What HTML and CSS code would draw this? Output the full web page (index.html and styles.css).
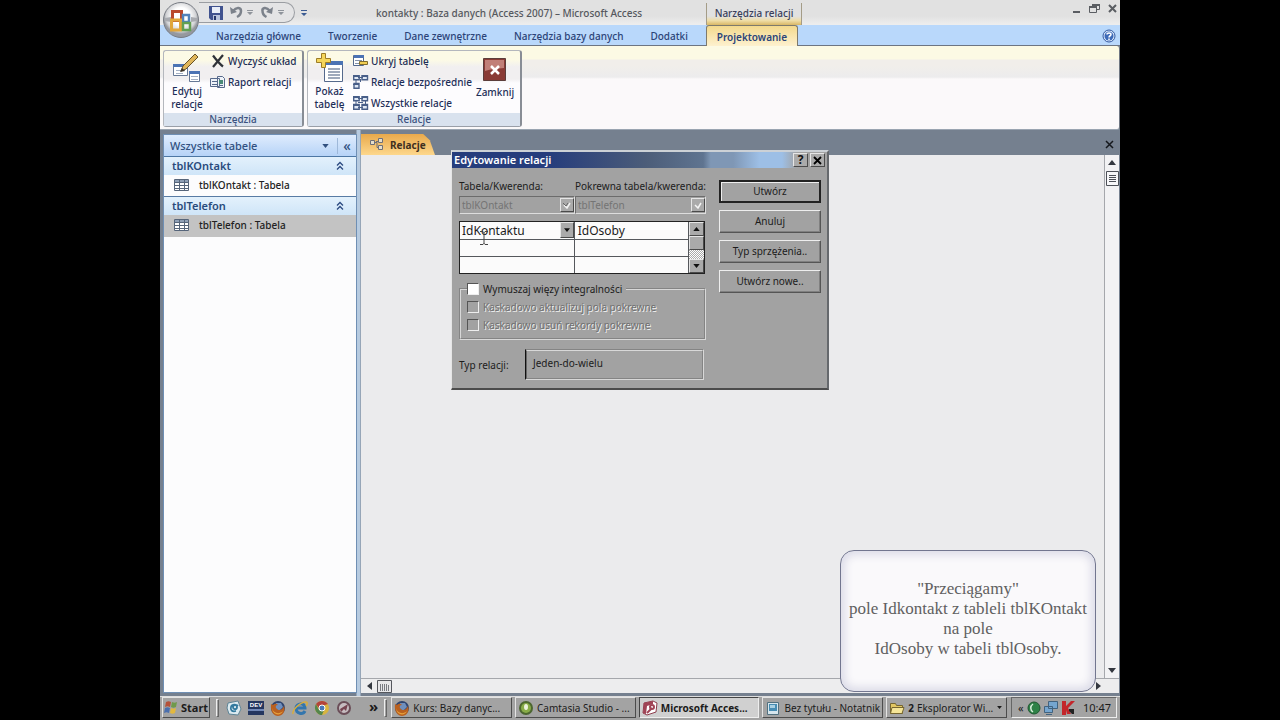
FILE: index.html
```html
<!DOCTYPE html>
<html lang="pl">
<head>
<meta charset="utf-8">
<title>kontakty : Baza danych (Access 2007) - Microsoft Access</title>
<link rel="stylesheet" href="styles.css">
</head>
<body>
<svg class="defs" aria-hidden="true">
  <symbol id="table" viewBox="0 0 16 14"><path fill="#fff" stroke="#56657a" d="M.5 1.5h14v11H.5z"/><path fill="#8fa0b6" d="M1 2h13v2H1z"/><path stroke="#56657a" fill="none" d="M1 4.5h13M1 7.5h13M1 10.5h13M5.500 2v10M10.500 2v10"/></symbol>
  <symbol id="up2" viewBox="0 0 8 10"><path fill="none" stroke="#2c4a80" stroke-width="1.300" d="M1 4.500l3-3 3 3M1 8.500l3-3 3 3"/></symbol>
  <symbol id="down" viewBox="0 0 8 5"><path d="M0 0h8L4 5z" fill="currentColor"/></symbol>
  <symbol id="fox" viewBox="0 0 16 16"><circle cx="8" cy="8" r="7" fill="#30456f"/><path fill="#6f8fbd" d="M6 3h5l2 4-4 4-4-3z"/><path fill="#b9601f" d="M1 4l2 1c2-2 4-1 5 0-2 0-3 1-2 3 2 3 6 3 8-2 2 6-2 10-6 10S0 12 1 4z"/><path fill="#e6a13c" d="M2 8c1 5 7 7 11 3-2 5-10 5-11-3z"/></symbol>
</svg>
<main class="screen">
  <header class="titlebar">
    <div class="quick">
      <button aria-label="Zapisz"><svg width="14" height="14" viewBox="0 0 14 14"><path fill="#41538f" d="M0 0h14v14H2l-2-2z"/><path fill="#e9eef8" d="M3 1h8v6H3z"/><path fill="#b9c4dc" d="M4 9h7v5H4z"/><path fill="#26366b" d="M5 10h2v4H5z"/></svg></button>
      <button aria-label="Cofnij"><svg width="24" height="13" viewBox="0 0 24 13"><path fill="none" stroke="#7c828b" stroke-width="2.500" d="M3 5c4-5 8-3 8 0 0 3-2 5-4 6"/><path fill="#7c828b" d="M0 1l1 7 6-2z"/><path fill="#8f949b" d="M17 4h6v1h-6zM17 6h6l-3 3z"/></svg></button>
      <button aria-label="Ponów"><svg width="24" height="13" viewBox="0 0 24 13"><path fill="none" stroke="#7c828b" stroke-width="2.500" d="M9 5C5 0 1 2 1.500 5c0 3 2 5 4 6"/><path fill="#7c828b" d="M12 1l-1 7-6-2z"/><path fill="#8f949b" d="M17 4h6v1h-6zM17 6h6l-3 3z"/></svg></button>
    </div>
    <button class="more" aria-label="Dostosuj"><svg width="6" height="6" viewBox="0 0 6 6"><path d="M0 0h6v1H0zM0 3h6L3 6z" fill="#3b5b92"/></svg></button>
    <h1 class="title">kontakty : Baza danych (Access 2007) – Microsoft Access</h1>
    <div class="context">Narzędzia relacji</div>
    <div class="winbtns">
      <button aria-label="Minimalizuj"><svg width="9" height="9" viewBox="0 0 9 9"><path fill="#5a5d62" d="M1 7h7v2H1z"/></svg></button>
      <button aria-label="Przywróć"><svg width="11" height="9" viewBox="0 0 11 9"><path fill="none" stroke="#5a5d62" d="M3.500 2V.5h7v5H8M.5 2.500h7v6h-7z"/><path fill="#5a5d62" d="M3 0h8v2H3zM0 2h8v2H0z"/></svg></button>
      <button aria-label="Zamknij okno"><svg width="9" height="9" viewBox="0 0 9 9"><path stroke="#5a5d62" stroke-width="2" d="M1 1l7 7M8 1L1 8"/></svg></button>
    </div>
    <button class="orb" aria-label="Przycisk pakietu Office"><svg width="38" height="38" viewBox="0 0 38 38"><defs><radialGradient id="og" cy=".4"><stop offset=".5" stop-color="#fff"/><stop offset=".85" stop-color="#d2d3d6"/><stop offset="1" stop-color="#95989e"/></radialGradient></defs><circle cx="19" cy="19" r="17.500" fill="url(#og)" stroke="#777b83"/><path fill="#a9abb0" d="M3 17l6-1v5l-6-1zM35 17l-6-1v5l6-1z"/><path fill="none" stroke="#b9482c" stroke-width="3" d="M10.500 10.500h9v9h-9z"/><path fill="none" stroke="#5182b9" stroke-width="2.500" d="M21 14h6v7h-6z"/><path fill="none" stroke="#e0a63a" stroke-width="3" d="M9.500 19h9v10h-9z"/><path fill="none" stroke="#62a052" stroke-width="2.500" d="M21 22h7v7h-7z"/></svg></button>
  </header>
  <nav class="tabs">
    <a href="#">Narzędzia główne</a><a href="#">Tworzenie</a><a href="#">Dane zewnętrzne</a><a href="#">Narzędzia bazy danych</a><a href="#">Dodatki</a><a href="#" class="active">Projektowanie</a>
    <button class="help" aria-label="Pomoc"><svg width="14" height="14" viewBox="0 0 14 14"><circle cx="7" cy="7" r="6" fill="#dbe8fa" stroke="#3158a0"/><circle cx="7" cy="7" r="4.500" fill="#3c69b7"/><path fill="none" stroke="#fff" stroke-width="1.500" d="M5 5.500c0-2 4-2 4 0C9 7 7 6.500 7 8.500M7 9.500v1.500"/></svg></button>
  </nav>
  <section class="ribbon">
    <div class="group">
      <div class="tools">
        <button class="big edit"><svg width="30" height="30" viewBox="0 0 30 30"><g stroke="#667895" fill="#fff"><path d="M1.500 11.500h14v11h-14zM17.500 18.500h10v10h-10z"/></g><path fill="#4b73b4" d="M1 11h15v3H1zM17 18h11v3H17z"/><path stroke="#a3afc2" d="M4 17.500h9M4 20.500h7M19 23.500h7M19 26.500h7"/><path fill="#e0b65a" stroke="#665128" d="M9 18l2-5L23 1l3 3-12 12z"/><path fill="#3b3326" d="M8 19l2-4 3 3z"/></svg><span>Edytuj<br>relacje</span></button>
        <div class="list">
          <button><svg width="16" height="14" viewBox="0 0 16 14"><path fill="none" stroke="#2f3238" stroke-width="2.200" d="M3 1.500c3 4 6 8 10 11M13 1L3 13"/></svg>Wyczyść układ</button>
          <button><svg width="16" height="14" viewBox="0 0 16 14"><path fill="#eef2f8" stroke="#56698b" d="M.5 3.500h9v8h-9zM7.500 1.500h5l2 2v9h-7z"/><path stroke="#56698b" d="M2 6.500h5M2 9.500h5M9 10.500h4"/><path fill="#4b8a78" d="M9 5h4v4H9z"/></svg>Raport relacji</button>
        </div>
      </div>
      <h2>Narzędzia</h2>
    </div>
    <div class="group">
      <div class="tools">
        <button class="big show"><svg width="28" height="30" viewBox="0 0 28 30"><path fill="#fff" stroke="#55698c" d="M8.500 8.500h18v20h-18z"/><path fill="#4b73b4" d="M8 8h19v4H8z"/><path stroke="#7f8da5" stroke-width="1.500" d="M12 16h12M12 19h12M12 22h12M12 25h12"/><path fill="#f5d65b" stroke="#9d7d27" d="M5.500.5h4v5h5v4h-5v5h-4v-5h-5v-4h5z"/></svg><span>Pokaż<br>tabelę</span></button>
        <div class="list">
          <button><svg width="16" height="14" viewBox="0 0 16 14"><path fill="#fff" stroke="#53698e" d="M.5 1.500h10v10H.5z"/><path fill="#4b73b4" d="M1 1h10v3H1z"/><path stroke="#8593aa" d="M2 6.500h7M2 9.500h7"/><path fill="#f1ce51" stroke="#816b2b" d="M6.500 7.500h8v3h-8z"/></svg>Ukryj tabelę</button>
          <button><svg width="16" height="14" viewBox="0 0 16 14"><g fill="#dfe7f4" stroke="#485e88" stroke-width="1.400"><path d="M.7.7h5.500v4H.7zM9 .7h5.500v4H9zM1 8.500h5v4.800H1z"/></g><path stroke="#485e88" d="M5 2.500h5M3 5v3M0 1.500h6M9 1.500h6M0 9.500h6M7.500 4v3"/></svg>Relacje bezpośrednie</button>
          <button><svg width="16" height="14" viewBox="0 0 16 14"><g fill="#dfe7f4" stroke="#485e88" stroke-width="1.400"><path d="M.7.7h5.500v4H.7zM9 .7h5.500v4H9zM.7 8.500h5.500v4.800H.7zM9 8.500h5.500v4.800H9z"/></g><path stroke="#485e88" d="M5 2.500h5M5 11.500h5M3 5v3M12.500 5v3M0 1.500h6M9 1.500h6M0 9.500h6M9 9.500h6M5 6.500h5"/></svg>Wszystkie relacje</button>
        </div>
        <button class="big close"><svg width="24" height="24" viewBox="0 0 24 24"><path fill="#8a3b35" stroke="#5c3e3b" d="M.5.5h22v22H.5z"/><path fill="#c18078" d="M2 2h19v8c-7 1-13 1-19 3z"/><path stroke="#fff" stroke-width="2.500" d="M8 8l8 8M16 8l-8 8"/></svg><span>Zamknij</span></button>
      </div>
      <h2>Relacje</h2>
    </div>
  </section>
  <section class="workspace">
    <aside class="navpane">
      <header><h2>Wszystkie tabele</h2><button class="drop" aria-label="Wybierz"><svg width="7" height="4"><use href="#down"/></svg></button><button aria-label="Zwiń">«</button></header>
      <h3>tblKOntakt<svg width="8" height="10"><use href="#up2"/></svg></h3>
      <a href="#"><svg width="16" height="14"><use href="#table"/></svg>tblKOntakt : Tabela</a>
      <h3>tblTelefon<svg width="8" height="10"><use href="#up2"/></svg></h3>
      <a href="#" class="selected"><svg width="16" height="14"><use href="#table"/></svg>tblTelefon : Tabela</a>
    </aside>
    <section class="document">
      <header><a href="#" class="doctab"><svg width="14" height="13" viewBox="0 0 14 13"><g fill="#e7dfcb" stroke="#6e6f78"><path d="M.5 2.500h4v4h-4zM8.500.5h4v4h-4zM8.500 7.500h4v4h-4z"/></g><path fill="none" stroke="#6e6f78" d="M5 4.500h2v5h2M6 3.500h3"/></svg>Relacje</a><button class="docclose" aria-label="Zamknij kartę"><svg width="9" height="9" viewBox="0 0 9 9"><path stroke="#15181d" stroke-width="1.500" d="M1 1l7 7M8 1L1 8"/></svg></button></header>
      <div class="canvas"></div>
      <div class="vscroll"><svg width="8" height="5" class="flip"><use href="#down"/></svg><svg width="13" height="15" viewBox="0 0 13 15"><path fill="#f7f7f9" stroke="#4d5058" d="M.5.5h12v14H.5z"/><path stroke="#4d5058" d="M3 4.500h7M3 6.500h7M3 8.500h7M3 10.500h7"/></svg><svg width="8" height="5" class="end"><use href="#down"/></svg></div>
      <div class="hscroll"><svg width="5" height="8" viewBox="0 0 5 8"><path d="M5 0v8L0 4z" fill="#33373f"/></svg><svg width="15" height="13" viewBox="0 0 15 13"><path fill="#e6e6e8" stroke="#55575d" d="M.5.5h14v12H.5z"/><path stroke="#777a80" d="M3.500 4v7M5.500 4v7M7.500 4v7M9.500 4v7M11.500 5v6"/></svg><svg width="5" height="8" viewBox="0 0 5 8" class="end"><path d="M0 0v8l5-4z" fill="#33373f"/></svg></div>
    </section>
  </section>

  <section class="dialog" role="dialog" aria-labelledby="dlg">
    <header><h2 id="dlg">Edytowanie relacji</h2><button aria-label="Pomoc okna">?</button><button aria-label="Zamknij okno relacji"><svg width="9" height="9" viewBox="0 0 9 9"><path stroke="#000" stroke-width="1.800" d="M1 1l7 7M8 1L1 8"/></svg></button></header>
    <div class="dlgbody">
      <div class="form">
        <div class="sources">
          <div><label for="t1">Tabela/Kwerenda:</label><div class="combo"><select id="t1" disabled><option>tblKOntakt</option></select><i><svg width="8" height="7" viewBox="0 0 8 7"><path fill="none" stroke="#f4f4f4" stroke-width="1.500" d="M1 3l3 3 3-5"/><path fill="none" stroke="#666" d="M0 1l3 3 2-3"/></svg></i></div></div>
          <div><label for="t2">Pokrewna tabela/kwerenda:</label><div class="combo"><select id="t2" disabled><option>tblTelefon</option></select><i><svg width="8" height="7" viewBox="0 0 8 7"><path fill="none" stroke="#f4f4f4" stroke-width="1.500" d="M1 3l3 3 3-5"/></svg></i></div></div>
        </div>
        <div class="fields">
          <table>
            <tr><td><div class="cellcombo"><select aria-label="Pole tabeli"><option>IdKontaktu</option></select><i><svg width="6" height="4"><use href="#down"/></svg></i></div></td><td>IdOsoby</td></tr>
            <tr><td></td><td></td></tr>
            <tr><td></td><td></td></tr>
          </table>
          <div class="gridscroll"><i><svg width="7" height="4" class="flip"><use href="#down"/></svg></i><i></i><b></b><i><svg width="7" height="4"><use href="#down"/></svg></i></div>
        </div>
        <fieldset>
          <legend><label><input type="checkbox">Wymuszaj więzy integralności</label></legend>
          <label class="off"><input type="checkbox" disabled>Kaskadowo aktualizuj pola pokrewne</label>
          <label class="off"><input type="checkbox" disabled>Kaskadowo usuń rekordy pokrewne</label>
        </fieldset>
        <div class="kind"><span>Typ relacji:</span><output>Jeden-do-wielu</output></div>
      </div>
      <div class="actions">
        <button class="default">Utwórz</button>
        <button>Anuluj</button>
        <button>Typ sprzężenia..</button>
        <button>Utwórz nowe..</button>
      </div>
    </div>
  </section>
  <svg class="cursor" width="8" height="14" viewBox="0 0 8 14"><path fill="none" stroke="#444" d="M0 .5h3l1 1 1-1h3M4 1v12M0 13.500h3l1-1 1 1h3"/></svg>
  <p class="callout">"Przeciągamy"<br>pole Idkontakt z tableli tblKOntakt<br>na pole<br>IdOsoby w tabeli tblOsoby.</p>

  <footer class="taskbar">
    <button class="start"><svg width="16" height="15" viewBox="0 0 16 15"><path fill="#b5523a" d="M3 2c2-1 3-1 5 0L7 7c-2-1-3-1-5 0z"/><path fill="#6f9a4b" d="M9 2c2 1 3 1 5 0l-1 5c-2 1-3 1-5 0z"/><path fill="#4a6fae" d="M2 8c2-1 3-1 5 0l-1 5c-2-1-3-1-5 0z"/><path fill="#e2b83e" d="M8 8c2 1 3 1 5 0l-1 5c-2 1-3 1-5 0z"/></svg>Start</button>
    <span class="grip"></span>
    <div class="launch">
      <button aria-label="Poczta"><svg width="16" height="16" viewBox="0 0 16 16"><path fill="#dceaf0" stroke="#5e8496" d="M2 3l10-2 3 8-3 6-9-1-2-6z"/><path fill="none" stroke="#327a9f" stroke-width="1.800" d="M10 11c-4 1-6-1-5-4s6-3 6 0-4 3-4 0 4-2 5-1"/></svg></button>
      <button aria-label="DEV"><svg width="16" height="16" viewBox="0 0 16 16"><path fill="#24365f" d="M0 1h16v14H0z"/><path fill="#7188b7" d="M0 9h16v2H0z"/><text x="8" y="7" text-anchor="middle" class="dev">DEV</text></svg></button>
      <button aria-label="Firefox"><svg width="16" height="16"><use href="#fox"/></svg></button>
      <button aria-label="Internet Explorer"><svg width="16" height="16" viewBox="0 0 16 16"><path fill="none" stroke="#3476ad" stroke-width="3" d="M13 11c-2 4-9 3-9-3 0-5 9-6 9 0H5"/><path fill="none" stroke="#d7ad3e" stroke-width="1.500" d="M1 14C0 10 8 2 14 2c2 0 1 3 0 4"/></svg></button>
      <button aria-label="Chrome"><svg width="16" height="16" viewBox="0 0 16 16"><circle cx="8" cy="8" r="7" fill="#d8b43f"/><path fill="#b3433b" d="M2 4c3-4 9-4 12 0l-6 2-2 4z"/><path fill="#55864c" d="M2 4c-3 5 1 11 6 11l2-5H5z"/><circle cx="8" cy="8" r="3" fill="#4b79b6" stroke="#fff"/></svg></button>
      <button aria-label="Quick"><svg width="16" height="16" viewBox="0 0 16 16"><circle cx="8" cy="8" r="6" fill="#c6bcc0" stroke="#6b4e58" stroke-width="2"/><path fill="#764451" d="M4 9l8-5-2 7-2-2-3 3z"/></svg></button>
    </div>
    <span class="chev">»</span>
    <span class="grip"></span>
    <div class="tasks">
      <button><svg width="16" height="16"><use href="#fox"/></svg>Kurs: Bazy danyc...</button>
      <button><svg width="16" height="16" viewBox="0 0 16 16"><circle cx="8" cy="8" r="7" fill="#4c6630"/><circle cx="8" cy="8" r="5" fill="#88ac48"/><ellipse cx="8" cy="7" rx="2" ry="3" fill="#edf2dd"/></svg>Camtasia Studio - ...</button>
      <button class="current"><svg width="16" height="16" viewBox="0 0 16 16"><path fill="#fff" stroke="#8d3c4c" d="M2 3l9-2 4 2-1 9-9 3-4-2z"/><path fill="#a04456" d="M2 3l9-2v3L5 6l-1 8-3-1z"/><path fill="none" stroke="#a04456" stroke-width="2" d="M5 13l5-5"/><circle cx="10" cy="7" r="2" fill="none" stroke="#a04456" stroke-width="2"/></svg>Microsoft Acces...</button>
      <button><svg width="16" height="16" viewBox="0 0 16 16"><path fill="#d7e6ed" stroke="#53717f" d="M2.500 2.500h11v12h-11z"/><path fill="#478db4" d="M4 4h8v7H4z"/><path fill="#a9d0e2" d="M5 5h5v3H5z"/></svg>Bez tytułu - Notatnik</button>
      <button><svg width="16" height="16" viewBox="0 0 16 16"><path fill="#e2c762" stroke="#766630" d="M1.500 3.500h5l1 2h6v8h-12z"/><path fill="#f5e597" stroke="#766630" d="M3 7.500h12l-2 6H1.500z"/></svg><b>2</b>Eksplorator Wi...<svg width="5" height="3" class="end"><use href="#down"/></svg></button>
    </div>
    <div class="tray"><span>«</span>
      <svg width="14" height="14" viewBox="0 0 14 14"><circle cx="7" cy="7" r="6" fill="#2d8146" stroke="#1e5730"/><path fill="none" stroke="#d8efdc" stroke-width="1.500" d="M6 3c-3 2-3 6 0 8"/></svg>
      <svg width="14" height="14" viewBox="0 0 14 14"><path fill="#75a6d0" stroke="#42637f" d="M4.500.5h9v7h-9zM.5 5.500h8v6h-8z"/><path stroke="#42637f" d="M2 13.500h6"/></svg>
      <svg width="14" height="14" viewBox="0 0 14 14"><path fill="#c3262b" d="M1 0h4v5l5-5h4L7 7l3 6H6L5 9v5H1z"/><path fill="#222" d="M8 8h5v5h-2l-3-3z"/></svg>
      <time>10:47</time></div>
  </footer>
</main>
</body>
</html>
```
FILE: styles.css
```css
* { box-sizing: border-box; }
html, body { height: 100%; }
body { margin: 0; background: #000; display: flex; justify-content: center; font-family: "Noto Sans", sans-serif; font-size: 10px; font-weight: 500; line-height: 14px; color: #1d2e58; }
h1, h2, h3, p { margin: 0; font-size: inherit; font-weight: inherit; }
button { font: inherit; color: inherit; background: none; border: 0; padding: 0; white-space: nowrap; }
a { color: inherit; text-decoration: none; white-space: nowrap; }
svg { flex: none; display: block; }
.defs { position: absolute; width: 0; height: 0; }
.flip { transform: scaleY(-1); }
.screen { position: relative; width: 75%; min-height: 100vh; display: flex; flex-direction: column; overflow: hidden; background: #75808f; }

.titlebar { position: relative; height: 25px; flex: none; display: flex; align-items: center; background: linear-gradient(#e1e1e1 0 16px, #ededed 24px); }
.quick { width: 96px; height: 21px; margin: 2px 0 0 39px; padding: 0 0 0 10px; display: flex; align-items: center; gap: 7px; border: 1px solid #9a9da2; border-left: 0; border-radius: 0 11px 11px 0; background: #e4e4e5; align-self: flex-start; }
.more { margin-left: 6px; }
.title { margin-left: 69px; color: #55585e; white-space: nowrap; }
.context { position: absolute; left: 546px; top: 3px; width: 96px; height: 22px; padding-top: 3px; text-align: center; font-weight: 500; color: #3b3f5b; border: solid #a49c87; border-width: 0 1px; background: linear-gradient(#e1e1e1 0 60%, #efdda6 80%, #d9b765); white-space: nowrap; }
.winbtns { margin-left: auto; margin-right: 3px; display: flex; gap: 8px; align-self: flex-start; padding-top: 4px; }
.orb { position: absolute; left: 2px; top: 1px; }

.tabs { height: 21px; flex: none; display: flex; align-items: center; padding: 1px 0 0 56px; gap: 27px; background: #b9d8fb; border-bottom: 1px solid #6d7582; color: #2c4478; }
.tabs .active { align-self: stretch; width: 92px; margin: -1px 0 -1px -9px; padding-top: 4px; text-align: center; font-weight: 600; background: linear-gradient(#f3d98c, #fdf1cf); border: 1px solid #7e7a6c; border-bottom: 0; border-radius: 3px 3px 0 0; }
.help { margin-left: auto; margin-right: 4px; }

.ribbon { height: 84px; flex: none; display: flex; gap: 3px; padding: 4px 3px 2px; border-bottom: 1px solid #9aa5b1; border-right: 1px solid #6f7783; border-radius: 0 3px 3px 0; background: linear-gradient(#fcfae4 0 13px, #f1eeea 14px 20px, #ececed 31px, #fbf9fa 33px); }
.group { display: flex; flex-direction: column; border: 1px solid #b4b7bd; border-right: 2px solid #888d95; border-bottom-color: #9a9fa8; border-radius: 3px; background: linear-gradient(#fcfae6 0 9px, #f1eff0 16px 28px, #fdfcfe 32px); }
.group h2 { height: 13px; line-height: 13px; text-align: center; background: #d9e2ee; color: #3b527f; }
.tools { flex: 1; display: flex; }
.big { display: flex; flex-direction: column; align-items: center; line-height: 13px; text-align: center; }
.big span { display: block; }
.edit { width: 46px; padding-top: 2px; gap: 2px; }
.show { width: 43px; padding-top: 2px; gap: 2px; }
.close { width: 50px; padding-top: 7px; gap: 4px; justify-content: flex-start; }
.list { display: flex; flex-direction: column; gap: 7px; padding-top: 3px; }
.list button { display: flex; align-items: center; gap: 2px; text-align: left; }
.group:first-child .list { width: 92px; }
.group:last-child .list { width: 119px; padding-left: 2px; }

.workspace { flex: 1; display: grid; grid-template-columns: 194px 1fr; gap: 4px; padding: 4px 1px 3px 3px; min-height: 0; background: linear-gradient(90deg, #75808f 0 196px, #b7cbe0 197px 200px, #75808f 201px); }
.navpane { background: #fcfcfd; border: 1px solid #6f8fb4; }
.navpane header { height: 22px; display: flex; align-items: center; padding: 0 0 0 6px; background: linear-gradient(#dfecfd, #b6d3f7); border-bottom: 1px solid #4d77a4; color: #31507f; }
.navpane h2 { flex: 1; font-size: 11px; }
.navpane header button { width: 18px; font-size: 14px; }
.navpane .drop { border-right: 1px solid #9eb8d9; height: 16px; padding-left: 2px; width: 18px; }
.navpane h3 { height: 18px; display: flex; align-items: center; justify-content: space-between; padding: 0 12px 0 8px; font-size: 11px; font-weight: 600; color: #294b7c; background: linear-gradient(#e3f1fc, #cfe5f8); }
.navpane > a { height: 22px; display: flex; align-items: center; gap: 9px; padding: 0 0 2px 10px; color: #222; border-bottom: 1px solid #587ba4; }
.navpane .selected { background: #c3c3c3; border: 0; }

.document { display: grid; grid-template: 21px 1fr 15px / 1fr 15px; background: #ebebed; min-width: 0; }
.document header { grid-column: 1 / 3; display: flex; justify-content: space-between; align-items: center; background: #75808f; padding-right: 5px; }
.doctab { display: flex; align-items: center; gap: 6px; height: 21px; width: 74px; padding-left: 9px; background: linear-gradient(#e9a94b, #fdd78c); clip-path: polygon(0 0, 84% 0, 93% 30%, 100% 100%, 0 100%); font-weight: 700; color: #3f301f; }
.vscroll { display: flex; flex-direction: column; align-items: center; gap: 6px; padding: 5px 0; border-left: 1px solid #a5a7ac; color: #33373f; background: #f2f2f4; }
.hscroll { grid-column: 1 / 3; display: flex; align-items: center; gap: 5px; padding: 0 18px 0 6px; border-top: 1px solid #a5a7ac; background: #ededee; }
.vscroll .end { margin-top: auto; }
.hscroll .end { margin-left: auto; }

.dialog { position: absolute; left: 291px; top: 150px; width: 378px; border: 1px solid #55585c; border-top: 2px solid #ccd1d6; border-left-color: #e5e5e5; border-right: 2px solid #66696d; border-bottom: 2px solid #4c4c4c; background: #a2a2a2; color: #1c1c1c; font-weight: 400; line-height: 12px; white-space: nowrap; }
.dialog > header { height: 16px; display: flex; align-items: center; gap: 2px; padding: 0 2px; background: linear-gradient(90deg, #263d7c 0 26%, #4c5d79 52%, #5f7490 67%, #7f97b5 69% 75%, #9dbfe6 82% 88%, #a2a2a2 92%); }
.dialog h2 { flex: 1; font-size: 11px; font-weight: 600; color: #fff; }
.dialog > header button, .combo i, .cellcombo i, .gridscroll i { display: grid; place-items: center; flex: none; background: #aaa; border: 1px solid; border-color: #e6e6e6 #4a4a4a #4a4a4a #e6e6e6; color: #111; }
.dialog > header button { width: 15px; height: 14px; font-weight: 700; font-size: 12px; line-height: 12px; }
.dlgbody { display: flex; gap: 13px; padding: 12px 6px 8px 7px; }
.form { width: 247px; }
.sources { display: flex; }
.sources > div { width: 116px; }
.sources > div:last-child { width: 131px; }
.sources label { display: block; }
.combo { display: flex; align-items: center; height: 18px; margin-top: 4px; border: 1px solid; border-color: #6c6c6c #ddd #ddd #6c6c6c; }
select { appearance: none; flex: 1; min-width: 0; border: 0; padding: 0 2px; background: none; font: inherit; color: inherit; opacity: 1; }
.combo select { color: #747474; }
.combo i { width: 14px; height: 14px; }
.fields { display: flex; margin-top: 7px; width: 246px; border: 1px solid #222; }
table { width: 229px; border-collapse: collapse; table-layout: fixed; background: #fbfbfb; font-size: 12px; line-height: 15px; }
td { height: 17px; padding: 0 3px; border: solid #55585c; border-width: 0 1px 1px 0; }
tr:last-child td { border-bottom: 0; }
td:first-child { padding: 0; }
.cellcombo { display: flex; align-items: center; }
.cellcombo i { width: 14px; height: 16px; }
.gridscroll { flex: 1; display: flex; flex-direction: column; background: #a2a2a2; }
.gridscroll i { height: 14px; }
.gridscroll b { flex: 1; background: repeating-conic-gradient(#fff 0 25%, #aaa 0 50%) 0 0 / 2px 2px; }
fieldset { margin: 8px 0 0; padding: 2px 0 4px 6px; border: 2px groove #d8d8d8; min-width: 0; }
legend { padding: 0 4px 0 0; margin-left: 0; }
fieldset label { display: flex; align-items: center; gap: 4px; height: 14px; }
fieldset .off { height: 18px; color: #707070; text-shadow: 1px 1px 0 #f0f0f0; }
input { appearance: none; width: 12px; height: 12px; margin: 0; border: 1px solid; border-color: #555 #eee #eee #555; background: #fff; }
input:disabled { background: #a2a2a2; }
.kind { display: flex; align-items: center; margin-top: 9px; }
.kind span { width: 66px; }
output { flex: 1; height: 31px; margin-right: 2px; padding: 6px; border: 2px groove #d8d8d8; border-left-color: #666; }
.actions { flex: 1; display: flex; flex-direction: column; gap: 7px; }
.actions button { height: 23px; padding-bottom: 2px; border: 1px solid; border-color: #eee #555 #555 #eee; box-shadow: inset -1px -1px #808080; }
.actions .default { border: 2px solid #222; box-shadow: inset 1px 1px #eee; }

.cursor { position: absolute; left: 320px; top: 231px; }
.callout { position: absolute; right: 24px; bottom: 28px; width: 256px; height: 142px; padding-top: 28px; text-align: center; white-space: nowrap; font-family: "Liberation Serif", serif; font-size: 17px; font-weight: 400; line-height: 20px; color: #606060; border: 1px solid #72768f; border-radius: 14px; background: #faf9fb; box-shadow: inset 0 0 8px 4px #dcdce8; }

.taskbar { height: 24px; flex: none; display: flex; align-items: center; gap: 4px; padding: 0 3px 2px 2px; background: #a3a3a3; border-top: 1px solid #ddd; color: #1b1b1b; font-weight: 400; line-height: 14px; }
.start, .tasks button { height: 21px; display: flex; align-items: center; gap: 3px; border: 1px solid; border-color: #e4e4e4 #4c4c4c #4c4c4c #e4e4e4; }
.start { width: 48px; font-size: 11px; font-weight: 700; gap: 2px; }
.grip { width: 3px; height: 18px; margin-left: 2px; border: 1px solid; border-color: #eee #666 #666 #eee; }
.launch { display: flex; gap: 6px; margin-left: 3px; }
.dev { font: 700 6px "Liberation Sans", sans-serif; fill: #fff; }
.chev { margin-left: 13px; padding-bottom: 4px; font-size: 15px; font-weight: 700; }
.tasks { flex: 1; display: flex; gap: 3px; min-width: 0; }
.tasks button { flex: 1; padding-left: 2px; min-width: 0; overflow: hidden; }
.tasks .end { margin: 0 4px 0 auto; }
.tasks .current { font-weight: 700; background: #d0d0d0; border-color: #444 #eee #eee #444; }
.tray { display: flex; align-items: center; gap: 3px; width: 106px; height: 21px; padding: 0 5px 0 6px; border: 1px solid; border-color: #666 #eee #eee #666; font-size: 11px; }
.tray time { margin-left: auto; }
```
